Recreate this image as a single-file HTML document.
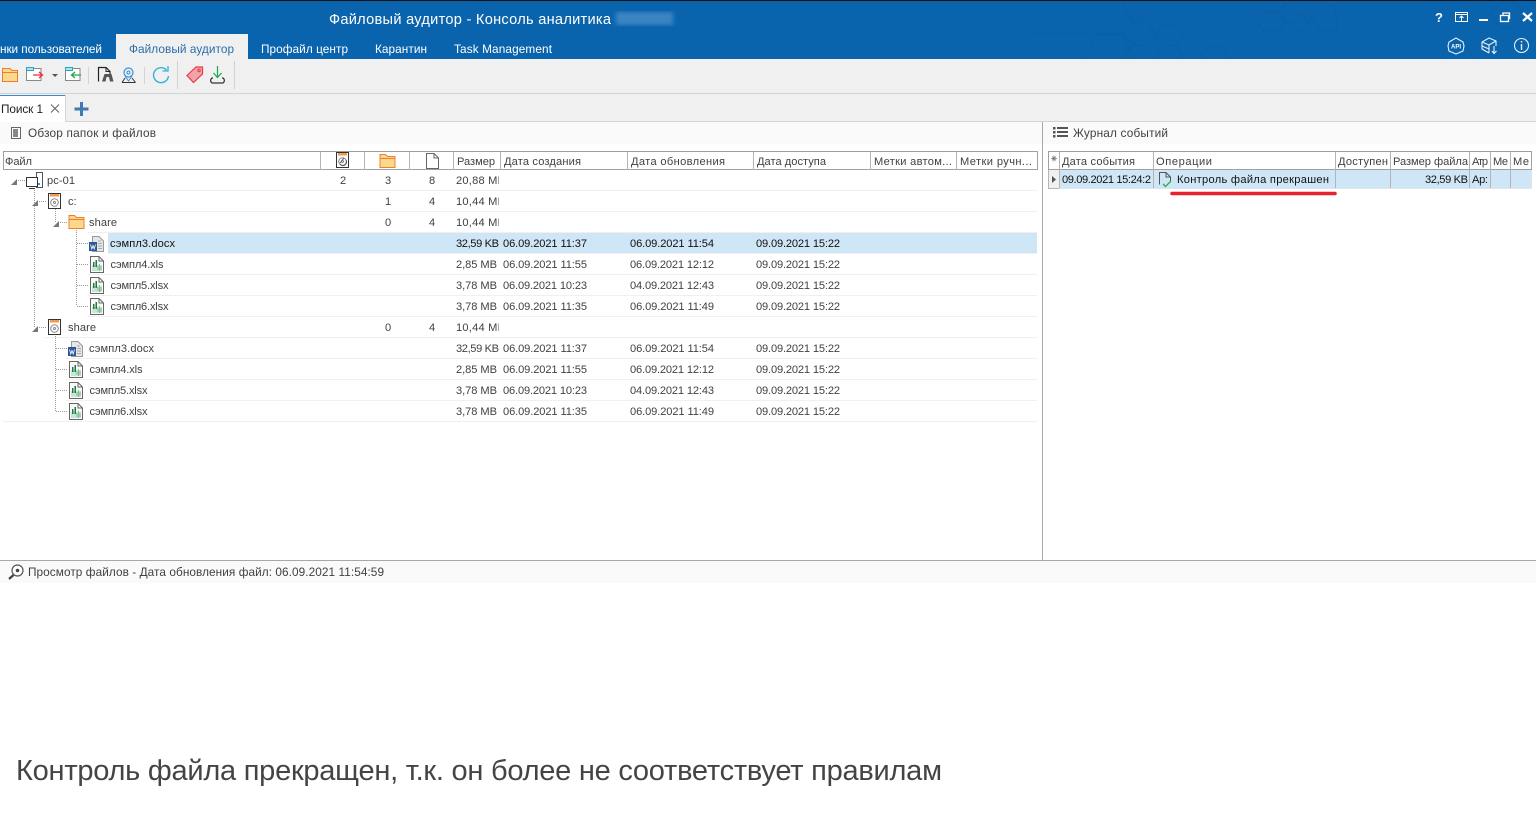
<!DOCTYPE html>
<html lang="ru"><head><meta charset="utf-8"><title>Файловый аудитор</title>
<style>
html,body{margin:0;padding:0;background:#fff;width:1536px;height:826px;overflow:hidden}
svg{display:block;font-family:"Liberation Sans","DejaVu Sans",sans-serif}
text{font-size:11.1px;fill:#414141;white-space:pre}
.w{fill:#fff}.d{fill:#111}
</style></head><body>
<svg width="1536" height="826" viewBox="0 0 1536 826" xmlns="http://www.w3.org/2000/svg">
<defs>
<clipPath id="cs"><rect x="450" y="170" width="49" height="260"/></clipPath>
<filter id="bl"><feGaussianBlur stdDeviation="2.2"/></filter>
<g id="xl"><path d="M.5 .5H9L13.500 5V16.500H.5Z" fill="#fafafa" stroke="#666"/><path d="M9 .5V5H13.500" fill="none" stroke="#666"/><rect x="2" y="9" width="10" height="6" fill="#c9e6d2"/><rect x="3" y="6" width="1.500" height="5" fill="#1c7a3c"/><rect x="5.500" y="4" width="1.500" height="7" fill="#1c7a3c"/><path d="M7 11H12M7 13H12M9.500 8V15" stroke="#7dbb92"/></g>
<g id="wd"><path d="M3.500 .5H10L14.500 5V15.500H3.500Z" fill="#e6e6e6" stroke="#999"/><path d="M9 5H12M9 7.500H13M9 10H13M9 12.500H13" stroke="#aaa"/><rect x="0" y="6" width="8" height="9" fill="#2b5797"/><path d="M1.500 8.500L2.800 13L4 9.500L5.200 13L6.500 8.500" stroke="#fff" fill="none" stroke-width=".8"/></g>
<g id="hd"><rect x=".5" y=".5" width="12" height="15" fill="#fff" stroke="#333"/><rect x="2" y="1" width="9" height="2.500" fill="#f29a45"/><circle cx="6.500" cy="9.500" r="3.800" fill="none" stroke="#888"/><circle cx="6.500" cy="9.500" r="1" fill="none" stroke="#888"/></g>
<g id="fo"><path d="M.5 14.500V1.500H6L8 3.500H15.500V14.500Z" fill="#fbd88e" stroke="#ee7f2d"/><path d="M.5 5.500H15.500" stroke="#ee7f2d"/></g>
<g id="tr"><path d="M6 0V6H0Z" fill="#777"/></g>
</defs>

<!-- title bar -->
<rect width="1536" height="59" fill="#0a64ad"/>
<rect width="1536" height="1" fill="#111"/>
<g fill="none" stroke="#0b5fa5" stroke-width="1.200">
<path d="M1031 34H1122L1133 22L1122 2M1122 34L1133 45L1123 59M1133 22H1146L1155 34L1146 45H1133M1146 12L1133 22M1162 25H1176L1184 35L1176 45H1162L1155 35ZM1162 45L1156 59M1176 45L1184 59M1084 59L1098 35H1122L1135 59M1200 59L1209 46H1222L1230 59"/>
<path d="M1257 22L1264 12H1278L1285 22L1278 32H1264ZM1278 12L1288 1M1285 22H1295L1301 12L1308 22L1301 32L1291 22M1308 12L1320 31H1324H1338L1335 9L1326 2"/>
<path d="M1440 59L1450 40H1464L1474 59M1490 14L1500 2H1516L1524 14L1516 28H1500ZM1500 40H1516L1526 59"/>
</g>
<text x="329" y="24" class="w" style="font-size:14.600px" textLength="282">Файловый аудитор - Консоль аналитика</text>
<rect x="616" y="12" width="57" height="13" fill="#5d9ad0" filter="url(#bl)" opacity=".6"/>
<text x="0" y="53" class="w" style="font-size:11.800px" textLength="102">нки пользователей</text>
<rect x="116" y="34" width="132" height="25" fill="#f0f0f0"/>
<text x="129" y="53" style="font-size:11.800px;fill:#2a6ea8" textLength="105">Файловый аудитор</text>
<text x="261" y="53" class="w" style="font-size:11.800px" textLength="87">Профайл центр</text>
<text x="375" y="53" class="w" style="font-size:11.800px" textLength="52">Карантин</text>
<text x="454" y="53" class="w" style="font-size:11.800px" textLength="98">Task Management</text>

<!-- window controls -->
<text x="1435" y="22" class="w" style="font-size:13px;font-weight:bold">?</text>
<g fill="none" stroke="#fff">
<rect x="1455.500" y="12.500" width="12" height="9"/><path d="M1456 14.500H1467" /><path d="M1461.500 21V16M1459.500 18L1461.500 16L1463.500 18" />
<rect x="1500.500" y="15.500" width="8" height="6" stroke-width="1.300"/><path d="M1503 15V13H1509.500V18.500H1508.500" stroke-width="1.300"/>
<path d="M1523 13L1532 21M1532 13L1523 21" stroke-width="2.200"/>
</g>
<rect x="1479" y="19" width="9" height="2" fill="#fff"/>
<g fill="none" stroke="#e6eef6" stroke-width="1.100">
<path d="M1449 42L1456 38L1463 42L1464 46L1463 51L1456 54L1449 51L1448 46Z"/>
<path d="M1482 42L1489 38L1496 41V46M1482 42V49L1489 53M1482 42L1489 45L1496 41M1489 45V53M1482 46L1489 49M1494 46V53M1492 51L1494 53.500L1496.500 51"/>
<circle cx="1521.500" cy="45.500" r="7"/><path d="M1521.500 44V50M1521.500 41V42.500" stroke-width="1.400"/>
</g>
<text x="1451" y="48.500" class="w" style="font-size:6px;font-weight:bold">API</text>

<!-- toolbar -->
<rect y="59" width="1536" height="34" fill="#f0f0f0"/>
<rect y="93" width="1536" height="1" fill="#d4d4d4"/>
<path d="M2.500 81.500V68.500H10L12 70.500H17.500V81.500Z" fill="#fbd88e" stroke="#ee7f2d"/><path d="M2.500 72.500H17.500" stroke="#ee7f2d"/>
<g fill="none">
<path d="M26.500 80.500V68.500H41V80.500Z" fill="#fff" stroke="#888"/><rect x="26.500" y="67.500" width="7" height="3" fill="#bde" stroke="#2ab"/><path d="M33 75H42M39 72L42.500 75L39 78" stroke="#ee2c3c" stroke-width="1.300"/>
<path d="M52 74H58L55 77Z" fill="#555"/>
<path d="M65.500 80.500V68.500H80V80.500Z" fill="#fff" stroke="#888"/><rect x="65.500" y="67.500" width="7" height="3" fill="#bde" stroke="#2ab"/><path d="M72 75H81M75 72L71.500 75L75 78" stroke="#19a84a" stroke-width="1.300"/>
<path d="M88.500 67V84M144.500 67V84" stroke="#d4d4d4"/>
<path d="M98.500 81.500V67.500H106L110 71.500V74" stroke="#222" stroke-width="1.200"/><path d="M106 67.500V71.500H110" stroke="#222"/>
<path d="M102 81.500H105.500L106.500 77H109L110 81.500H113.500L111.500 74H104.500Z" fill="#555"/>
<circle cx="128.500" cy="72.500" r="4.500" stroke="#3a93d6" stroke-width="1.200"/><circle cx="128.500" cy="72.500" r="1.500" stroke="#3a93d6"/><path d="M125 76L128.500 81L132 76" stroke="#3a93d6"/><path d="M122 82.500H135.500M125 78L122 82.500M132 78L135.500 82.500" stroke="#333"/>
<path d="M166.500 70A7.500 7.500 0 1 0 168.500 76" stroke="#2fb6d8" stroke-width="1.400"/><path d="M162.500 71H168V66" stroke="#2fb6d8" stroke-width="1.300"/>
<path d="M177.500 61V89M234.500 61V89" stroke="#d0d0d0"/>
<path d="M187 75.500L196 67H202.500V74L193.500 82.500Z" fill="#f4a3a8" stroke="#e33d48" stroke-width="1.200"/><circle cx="199" cy="70.500" r="1.200" stroke="#e33d48"/>
<path d="M217.500 66V77M213.500 73L217.500 77.500L221.500 73" stroke="#19a84a" stroke-width="1.200"/>
<path d="M213 78H212A3 3 0 0 0 212 83H223A3 3 0 0 0 223 78H222" stroke="#333" stroke-width="1.200"/>
</g>

<!-- tabs strip -->
<rect y="94" width="1536" height="27" fill="#f0f0f0"/>
<rect y="121" width="1536" height="1" fill="#d4d4d4"/>
<rect y="95" width="65" height="27" fill="#fff"/>
<rect y="95" width="65" height="1" fill="#3c8ad0"/>
<rect x="65" y="95" width="1" height="26" fill="#d4d4d4"/>
<text x="1" y="113" style="font-size:11.800px;fill:#222" textLength="42">Поиск 1</text>
<path d="M51 104.500L59 112.500M59 104.500L51 112.500" stroke="#666" stroke-width="1.100"/>
<path d="M81.500 102V116M74.500 109H88.500" stroke="#3f78b5" stroke-width="3"/>

<!-- panes -->
<rect y="122" width="1042" height="22" fill="#fafafa"/>
<rect x="1043" y="122" width="493" height="22" fill="#fafafa"/>
<rect x="1042" y="122" width="1" height="438" fill="#a8a8a8"/>
<rect y="560" width="1536" height="1" fill="#a8a8a8"/>
<rect y="561" width="1536" height="22" fill="#fafafa"/>

<!-- left header -->
<rect x="11.500" y="127.500" width="9" height="11" fill="#fff" stroke="#666"/><rect x="13" y="129" width="5" height="8" fill="#888"/>
<text x="28" y="137" style="font-size:11.800px" textLength="128">Обзор папок и файлов</text>
<rect x="3.500" y="151.500" width="1034" height="18" fill="#fff" stroke="#a0a0a0"/>
<path d="M320.500 152V170M364.500 152V170M409.500 152V170M453.500 152V170M500.500 152V170M627.500 152V170M753.500 152V170M870.500 152V170M956.500 152V170" stroke="#b4b4b4"/>
<text x="5" y="165" textLength="27">Файл</text>
<use href="#hd" x="336" y="152"/>
<path d="M340 163L344 158M340 164A3 3 0 0 0 346 160" fill="none" stroke="#555"/>
<use href="#fo" x="379.500" y="153"/>
<path d="M426.500 153.500H434L438.500 158V168.500H426.500Z M434 153.500V158H438.500" fill="#fff" stroke="#666"/>
<text x="457" y="165" textLength="38">Размер</text>
<text x="504" y="165" textLength="77">Дата создания</text>
<text x="631" y="165" textLength="94">Дата обновления</text>
<text x="757" y="165" textLength="69">Дата доступа</text>
<text x="874" y="165" textLength="78">Метки автом...</text>
<text x="960" y="165" textLength="72">Метки ручн...</text>

<!-- row dividers -->
<g stroke="#f0f0f0">
<path d="M45 190.500H1037M66 211.500H1037M87 232.500H1037M87 274.500H1037M87 295.500H1037M87 316.500H1037M45 337.500H1037M66 358.500H1037M66 379.500H1037M66 400.500H1037M3 421.500H1037M108 253.500H1037"/>
</g>
<rect x="108" y="233" width="929" height="20" fill="#cfe6f7"/>

<!-- tree lines -->
<g stroke="#999" stroke-dasharray="1 1" fill="none">
<path d="M34.500 188V327M18 180.500H26M55.500 209V222M39 201.500H47M60 222.500H67M76.500 230V306M77 243.500H88M77 264.500H88M77 285.500H88M77 306.500H88M39 327.500H47M55.500 336V411M56 348.500H67M56 369.500H67M56 390.500H67M56 411.500H67"/>
</g>
<use href="#tr" x="11" y="179"/><use href="#tr" x="32" y="200"/><use href="#tr" x="53" y="221"/><use href="#tr" x="32" y="326"/>

<!-- tree icons -->
<path d="M36.500 172.500H42.500V187.500H36.500Z" fill="#fff" stroke="#555"/><rect x="38" y="183" width="2" height="2" fill="#3a93d6"/>
<path d="M26.500 177.500H37.500V186.500H26.500Z" fill="#fff" stroke="#333"/><path d="M29 188.500H35" stroke="#333"/>
<use href="#hd" x="48" y="193"/>
<use href="#fo" x="68.500" y="214"/>
<use href="#wd" x="89" y="236"/>
<use href="#xl" x="90" y="256"/><use href="#xl" x="90" y="277"/><use href="#xl" x="90" y="298"/>
<use href="#hd" x="48" y="319"/>
<use href="#wd" x="68" y="341"/>
<use href="#xl" x="69" y="361"/><use href="#xl" x="69" y="382"/><use href="#xl" x="69" y="403"/>

<!-- tree labels -->
<text x="47" y="184" textLength="28">pc-01</text>
<text x="68" y="205">c:</text>
<text x="89" y="226" textLength="28">share</text>
<text x="110" y="247" class="d" textLength="65">сэмпл3.docx</text>
<text x="110.500" y="268" textLength="53">сэмпл4.xls</text>
<text x="110.500" y="289" textLength="58">сэмпл5.xlsx</text>
<text x="110.500" y="310" textLength="58">сэмпл6.xlsx</text>
<text x="68" y="331" textLength="28">share</text>
<text x="89" y="352" textLength="65">сэмпл3.docx</text>
<text x="89.500" y="373" textLength="53">сэмпл4.xls</text>
<text x="89.500" y="394" textLength="58">сэмпл5.xlsx</text>
<text x="89.500" y="415" textLength="58">сэмпл6.xlsx</text>

<!-- counts -->
<text x="340" y="184">2</text><text x="385" y="184">3</text><text x="429" y="184">8</text>
<text x="385" y="205">1</text><text x="429" y="205">4</text>
<text x="385" y="226">0</text><text x="429" y="226">4</text>
<text x="385" y="331">0</text><text x="429" y="331">4</text>

<!-- sizes -->
<g clip-path="url(#cs)">
<text x="456" y="184" textLength="49">20,88 MB</text>
<text x="456" y="205" textLength="49">10,44 MB</text>
<text x="456" y="226" textLength="49">10,44 MB</text>
<text x="456" y="331" textLength="49">10,44 MB</text>
</g>
<text x="456" y="247" class="d" textLength="43">32,59 KB</text>
<text x="456" y="268" textLength="41">2,85 MB</text>
<text x="456" y="289" textLength="41">3,78 MB</text>
<text x="456" y="310" textLength="41">3,78 MB</text>
<text x="456" y="352" textLength="43">32,59 KB</text>
<text x="456" y="373" textLength="41">2,85 MB</text>
<text x="456" y="394" textLength="41">3,78 MB</text>
<text x="456" y="415" textLength="41">3,78 MB</text>

<!-- dates -->
<g>
<text x="503" y="247" class="d" textLength="84">06.09.2021 11:37</text><text x="630" y="247" class="d" textLength="84">06.09.2021 11:54</text><text x="756" y="247" class="d" textLength="84">09.09.2021 15:22</text>
<text x="503" y="268" textLength="84">06.09.2021 11:55</text><text x="630" y="268" textLength="84">06.09.2021 12:12</text><text x="756" y="268" textLength="84">09.09.2021 15:22</text>
<text x="503" y="289" textLength="84">06.09.2021 10:23</text><text x="630" y="289" textLength="84">04.09.2021 12:43</text><text x="756" y="289" textLength="84">09.09.2021 15:22</text>
<text x="503" y="310" textLength="84">06.09.2021 11:35</text><text x="630" y="310" textLength="84">06.09.2021 11:49</text><text x="756" y="310" textLength="84">09.09.2021 15:22</text>
<text x="503" y="352" textLength="84">06.09.2021 11:37</text><text x="630" y="352" textLength="84">06.09.2021 11:54</text><text x="756" y="352" textLength="84">09.09.2021 15:22</text>
<text x="503" y="373" textLength="84">06.09.2021 11:55</text><text x="630" y="373" textLength="84">06.09.2021 12:12</text><text x="756" y="373" textLength="84">09.09.2021 15:22</text>
<text x="503" y="394" textLength="84">06.09.2021 10:23</text><text x="630" y="394" textLength="84">04.09.2021 12:43</text><text x="756" y="394" textLength="84">09.09.2021 15:22</text>
<text x="503" y="415" textLength="84">06.09.2021 11:35</text><text x="630" y="415" textLength="84">06.09.2021 11:49</text><text x="756" y="415" textLength="84">09.09.2021 15:22</text>
</g>

<!-- right pane -->
<g fill="#555"><rect x="1053" y="127" width="2.500" height="2.500"/><rect x="1053" y="131" width="2.500" height="2.500"/><rect x="1053" y="135" width="2.500" height="2.500"/><rect x="1053" y="139" width="0" height="0"/><rect x="1057" y="127" width="11" height="2"/><rect x="1057" y="131" width="11" height="2"/><rect x="1057" y="135" width="11" height="2"/></g>
<text x="1073" y="137" style="font-size:11.800px" textLength="95">Журнал событий</text>
<rect x="1048.500" y="151.500" width="483" height="18" fill="#fff" stroke="#a0a0a0"/>
<rect x="1049" y="170" width="10" height="19" fill="#f0f0f0"/>
<rect x="1059" y="170" width="472" height="19" fill="#cfe6f7"/>
<path d="M1048.500 170V188.500H1059M1059.500 152V189M1153.500 152V189M1335.500 152V189M1390.500 152V189M1469.500 152V189M1490.500 152V189M1510.500 152V189" fill="none" stroke="#b4b4b4"/>
<path d="M1531.500 170V189M1059 188.500H1531" stroke="#dbe6ee"/>
<path d="M1051 158.500H1057M1054 155.500V161.500M1052 156.500L1056 160.500M1056 156.500L1052 160.500" stroke="#777" stroke-width=".8"/>
<text x="1062" y="165" textLength="73">Дата события</text>
<text x="1156" y="165" textLength="56">Операции</text>
<text x="1338" y="165" textLength="50">Доступен</text>
<text x="1393" y="165" textLength="75">Размер файла</text>
<text x="1472" y="165" textLength="16">Атр</text>
<text x="1493" y="165" textLength="15">Ме</text>
<text x="1513" y="165" textLength="16">Ме</text>
<path d="M1052 176V183L1056 179.500Z" fill="#555"/>
<text x="1062" y="183" class="d" textLength="89">09.09.2021 15:24:2</text>
<path d="M1159.500 184.500V172.500H1166L1170.500 177V182M1166 172.500V177H1170.500" fill="none" stroke="#555"/>
<path d="M1163 184L1165.500 186.500L1171 181" fill="none" stroke="#2fa84f" stroke-width="1.300"/>
<text x="1177" y="183" class="d" textLength="152">Контроль файла прекрашен</text>
<text x="1425" y="183" class="d" textLength="43">32,59 KB</text>
<text x="1472" y="183" class="d" textLength="16">Ар:</text>
<path d="M1172 193.500H1335" stroke="#e8212e" stroke-width="3.500" stroke-linecap="round"/>

<!-- bottom -->
<circle cx="17.500" cy="570.500" r="5.500" fill="#fff" stroke="#555" stroke-width="1.200"/><circle cx="17.500" cy="570.500" r="1.800" fill="#444"/><path d="M13.500 575L9 579" stroke="#444" stroke-width="2.200"/>
<text x="28" y="576" style="font-size:11.800px" textLength="356">Просмотр файлов - Дата обновления файл: 06.09.2021 11:54:59</text>
<text x="16" y="780" style="font-size:29px;fill:#444" textLength="926">Контроль файла прекращен, т.к. он более не соответствует правилам</text>
</svg>
</body></html>
